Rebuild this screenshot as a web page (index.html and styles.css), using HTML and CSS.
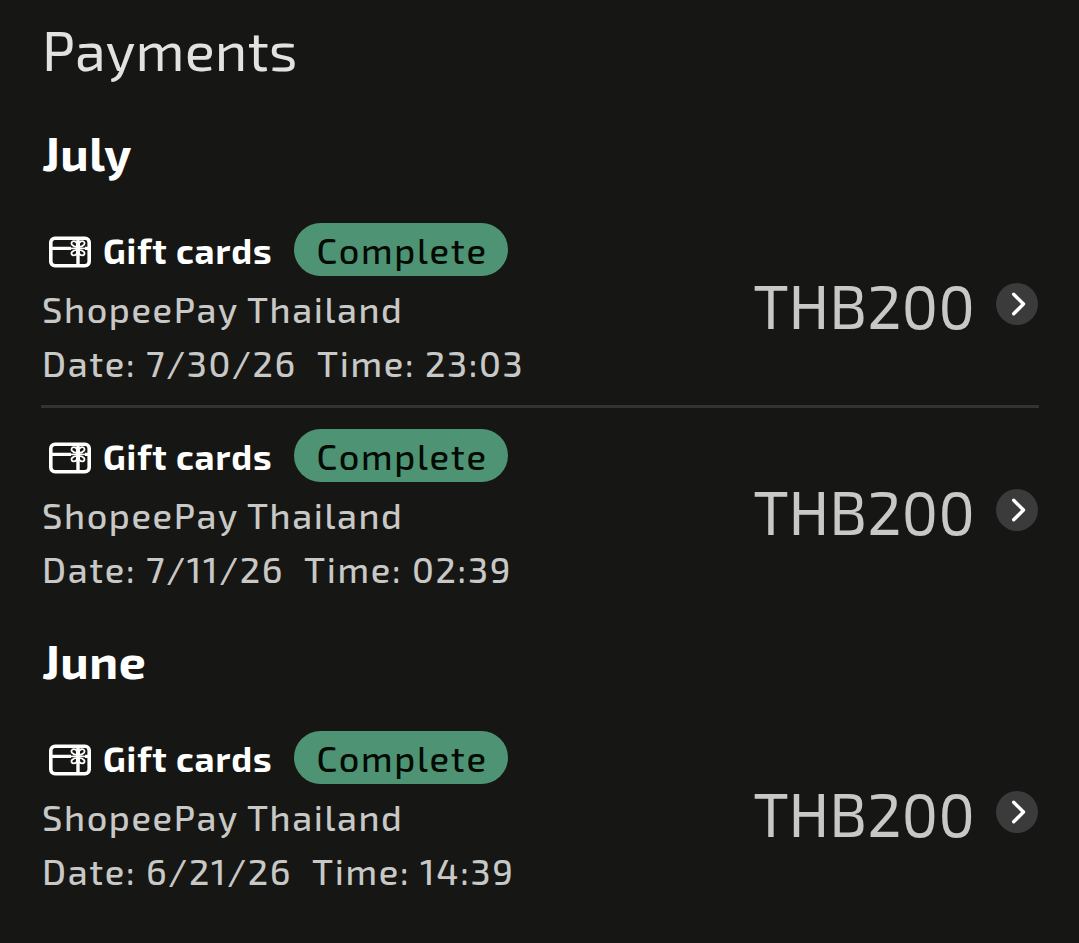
FILE: index.html
```html
<!DOCTYPE html>
<html lang="en">

<head>
    <meta charset="UTF-8">
    <meta name="viewport" content="width=device-width, initial-scale=1.0">
    <title>Payments</title>
    <link rel="stylesheet" href="styles.css">
</head>

<body>

    <!-- Shared icons -->
    <svg class="icon-defs" width="0" height="0">
        <symbol id="gift-card" viewBox="0 0 42 32">
            <g fill="none" stroke="#fff">
                <rect x="1.8" y="2.2" width="38.4" height="27.6" rx="4.2" stroke-width="3.6" />
                <path d="M2 12.4H22M36 12.4H40M29 3V30" stroke-width="3.4" />
                <path d="M22 12.4H36" stroke-width="1.6" />
                <path d="M28 11V8.6C28 6.5 26.5 5.2 24.8 5.2C22.5 5.2 21.9 7.4 23.1 8.8C24 9.8 26 10.8 28 11M30 11V8.6C30 6.5 31.5 5.2 33.2 5.2C35.5 5.2 36.1 7.4 34.9 8.8C34 9.8 32 10.8 30 11M28 13.8V16C28 18.1 26.5 19.4 24.8 19.4C22.5 19.4 21.9 17.2 23.1 15.8C24 14.8 26 14 28 13.8M30 13.8V16C30 18.1 31.5 19.4 33.2 19.4C35.5 19.4 36.1 17.2 34.9 15.8C34 14.8 32 14 30 13.8" stroke-width="1.8" />
            </g>
        </symbol>
        <symbol id="chevron" viewBox="0 0 42 42">
            <circle cx="21" cy="21" r="21" fill="#3b3b3c" />
            <path d="M17.7 11.3L27.5 21L17.7 30.8" fill="none" stroke="#fff" stroke-width="3.4" stroke-linecap="round" stroke-linejoin="round" />
        </symbol>
    </svg>

    <div class="container">
        <h1>Payments</h1>

        <section class="month">
            <h2>July</h2>
            <div class="payment">
                <div class="details">
                    <div class="type">
                        <svg class="card-icon"><use href="#gift-card" /></svg>
                        <span class="name">Gift cards</span>
                        <span class="status">Complete</span>
                    </div>
                    <div class="shop">ShopeePay Thailand</div>
                    <div class="when"><span>Date: 7/30/26</span><span>Time: 23:03</span></div>
                </div>
                <div class="amount">THB200</div>
                <svg class="arrow"><use href="#chevron" /></svg>
            </div>
            <div class="payment">
                <div class="details">
                    <div class="type">
                        <svg class="card-icon"><use href="#gift-card" /></svg>
                        <span class="name">Gift cards</span>
                        <span class="status">Complete</span>
                    </div>
                    <div class="shop">ShopeePay Thailand</div>
                    <div class="when"><span>Date: 7/11/26</span><span>Time: 02:39</span></div>
                </div>
                <div class="amount">THB200</div>
                <svg class="arrow"><use href="#chevron" /></svg>
            </div>
        </section>

        <section class="month">
            <h2>June</h2>
            <div class="payment">
                <div class="details">
                    <div class="type">
                        <svg class="card-icon"><use href="#gift-card" /></svg>
                        <span class="name">Gift cards</span>
                        <span class="status">Complete</span>
                    </div>
                    <div class="shop">ShopeePay Thailand</div>
                    <div class="when"><span>Date: 6/21/26</span><span>Time: 14:39</span></div>
                </div>
                <div class="amount">THB200</div>
                <svg class="arrow"><use href="#chevron" /></svg>
            </div>
        </section>
    </div>

</body>

</html>
```

FILE: styles.css
```css
body {
    font-family: "Exo 2", "Noto Sans", sans-serif;
    margin: 0;
    background-color: #161614;
    color: #c8c8c6;
}

.icon-defs {
    display: block;
}

.container {
    padding: 13px 40px 0 41px;
}

h1 {
    margin: 0;
    padding-left: 1px;
    font-size: 56px;
    font-weight: 420;
    letter-spacing: 0.1px;
    line-height: 72px;
    color: #e2e2e0;
}

h2 {
    margin: 0;
    padding-left: 1px;
    font-size: 48px;
    font-weight: 700;
    letter-spacing: 0.5px;
    line-height: 60px;
    color: #fff;
}

.month {
    padding-top: 37px;
}

.month + .month {
    padding-top: 19px;
}

.payment {
    display: flex;
    height: 182px;
    padding-top: 21px;
    white-space: nowrap;
}

h2 + .payment {
    padding-top: 41px;
}

.payment + .payment {
    border-top: 3px solid #333332;
}

.details {
    flex: 1;
    padding-left: 1px;
    font-size: 36px;
    font-weight: 500;
    letter-spacing: 1.6px;
}

.type {
    display: flex;
    align-items: center;
    height: 53px;
}

.card-icon {
    width: 42px;
    height: 32px;
    margin: 5px 12px 0 7px;
}

.name {
    width: 191px;
    margin-top: 1px;
    font-size: 35px;
    font-weight: 700;
    letter-spacing: 0.9px;
    color: #fff;
}

.status {
    box-sizing: border-box;
    width: 214px;
    height: 53px;
    padding-left: 2px;
    border-radius: 27px;
    background-color: #4e9474;
    color: #030a04;
    line-height: 53px;
    letter-spacing: 1.7px;
    text-align: center;
}

.shop {
    padding-top: 6px;
    line-height: 54px;
}

.when {
    display: flex;
    gap: 20px;
    letter-spacing: 1.67px;
    line-height: 54px;
}

.amount {
    margin-top: 47px;
    margin-right: 21px;
    font-size: 61px;
    font-weight: 450;
    line-height: 69px;
}

.arrow {
    width: 42px;
    height: 42px;
    margin-top: 60px;
    margin-right: 1px;
}
```
